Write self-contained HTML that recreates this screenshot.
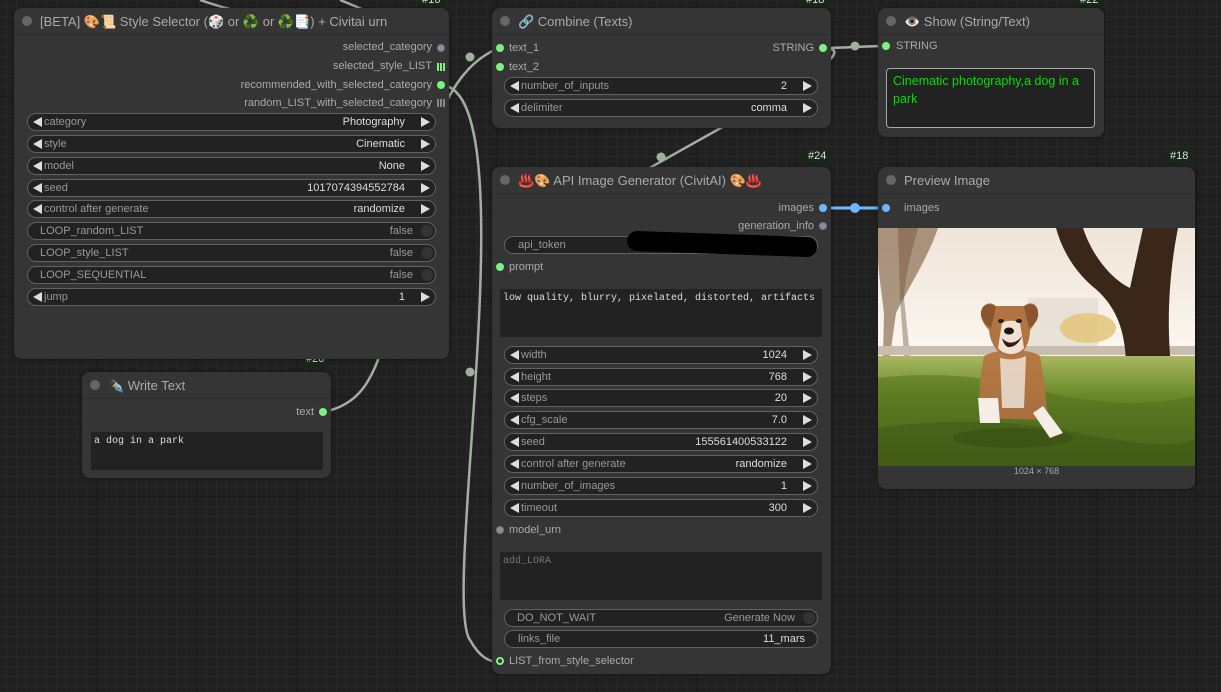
<!DOCTYPE html>
<html><head><meta charset="utf-8">
<style>
*{margin:0;padding:0;box-sizing:border-box}
body{width:1221px;height:692px;overflow:hidden;position:relative;font-family:"Liberation Sans","Noto Sans CJK SC",sans-serif;font-size:11px;color:#aaa;
background-color:#202020;
background-image:linear-gradient(#191919 1px,transparent 1px),linear-gradient(90deg,#191919 1px,transparent 1px),linear-gradient(#282828 1px,transparent 1px),linear-gradient(90deg,#282828 1px,transparent 1px);
background-size:100px 100px,100px 100px,10px 10px,10px 10px;background-position:-4px -4px}
.node{position:absolute;background:#353535;border-radius:8px;box-shadow:0 0 4px rgba(0,0,0,.5)}
.title{position:absolute;left:0;right:0;top:0;height:27px;border-bottom:1px solid #2c2c2c;color:#aaa;font-size:13px;line-height:27px;padding-left:26px;white-space:nowrap}
.title:before{content:"";position:absolute;left:8px;top:8px;width:10px;height:10px;border-radius:50%;background:#666}
.w{position:absolute;height:18px;background:#222;border:1px solid #616161;border-radius:9px;font-size:11px;line-height:16px;color:#999;white-space:nowrap}
.w .l{position:absolute;left:16px}
.w .v{position:absolute;right:30px;color:#ddd}
.w .la{position:absolute;left:5px;top:3px;width:0;height:0;border-top:5px solid transparent;border-bottom:5px solid transparent;border-right:9px solid #ddd}
.w .ra{position:absolute;right:5px;top:3px;width:0;height:0;border-top:5px solid transparent;border-bottom:5px solid transparent;border-left:9px solid #ddd}
.w.t .l{left:12px}.w.t .v{right:22px;color:#999}
.w.t .k{position:absolute;right:2px;top:2px;width:12px;height:12px;border-radius:50%;background:#333}
.w.s .l{left:13px}.w.s .v{right:12px}
.o{position:absolute;white-space:nowrap;text-align:right;color:#aaa}
.i{position:absolute;white-space:nowrap;color:#aaa}
.d{position:absolute;width:8px;height:8px;border-radius:50%}
.g{background:#7df17d}.gr{background:#8d8da0;border:1px solid #777}.b{background:#6cb8ff}
.ta{position:absolute;background:#222;font-family:"Liberation Mono",monospace;font-size:10px;color:#ddd;padding:4px 3px}
.badge{position:absolute;background:#182818;color:#ddd;font-size:11px;padding:1px 4px;border-radius:4px 4px 0 0;height:15px}
</style></head><body>
<svg width="1221" height="692" style="position:absolute;left:0;top:0" fill="none" stroke="#a2af9f" stroke-width="2.5">
<path d="M200 0 C215 5 230 10 245 12"/>
<path d="M340 0 C350 4 360 8 368 12"/>
<path d="M323 412 C360 405 372 380 385 340 C420 220 420 80 499 48"/>
<path d="M440 85 C530 85 440 600 470 640 C480 658 490 662 499 662"/>
<path d="M823 48 C900 48 560 200 499 268"/>
<path d="M823 48 C840 48 870 46 886 46"/>
<circle cx="470" cy="57" r="4.5" fill="#a2af9f" stroke="none"/>
<circle cx="470" cy="372" r="4.5" fill="#a2af9f" stroke="none"/>
<circle cx="661" cy="157" r="4.5" fill="#a2af9f" stroke="none"/>
<circle cx="855" cy="46" r="4.5" fill="#a2af9f" stroke="none"/>
<path d="M823 208 L886 208" stroke="#6cb8ff" stroke-width="3"/>
<circle cx="855" cy="208" r="5" fill="#6cb8ff" stroke="none"/>
</svg>

<div class="badge" style="left:302px;top:352px">#20</div>
<div class="badge" style="left:804px;top:149px">#24</div>
<div class="badge" style="left:1166px;top:149px">#18</div>
<div class="badge" style="left:418px;top:-7px">#16</div>
<div class="badge" style="left:802px;top:-7px">#18</div>
<div class="badge" style="left:1076px;top:-7px">#22</div>

<!-- Style selector -->
<div class="node" style="left:14px;top:8px;width:435px;height:351px">
<div class="title">[BETA] 🎨📜 Style Selector (🎲 or ♻️ or ♻️📑) + Civitai urn</div>
<div class="o" style="right:17px;top:33px">selected_category</div><div class="d gr" style="right:4px;top:36px"></div>
<div class="o" style="right:17px;top:52px">selected_style_LIST</div><div style="position:absolute;right:4px;top:55px;width:8px;height:8px;background:repeating-linear-gradient(90deg,#7df17d 0 2px,transparent 2px 3px)"></div>
<div class="o" style="right:17px;top:71px">recommended_with_selected_category</div><div class="d g" style="right:4px;top:73px"></div>
<div class="o" style="right:17px;top:89px">random_LIST_with_selected_category</div><div style="position:absolute;right:4px;top:91px;width:8px;height:8px;background:repeating-linear-gradient(90deg,#888 0 2px,transparent 2px 3px)"></div>
<div class="w" style="left:13px;top:105px;width:409px"><span class="la"></span><span class="l">category</span><span class="v">Photography</span><span class="ra"></span></div>
<div class="w" style="left:13px;top:127px;width:409px"><span class="la"></span><span class="l">style</span><span class="v">Cinematic</span><span class="ra"></span></div>
<div class="w" style="left:13px;top:149px;width:409px"><span class="la"></span><span class="l">model</span><span class="v">None</span><span class="ra"></span></div>
<div class="w" style="left:13px;top:171px;width:409px"><span class="la"></span><span class="l">seed</span><span class="v">1017074394552784</span><span class="ra"></span></div>
<div class="w" style="left:13px;top:192px;width:409px"><span class="la"></span><span class="l">control after generate</span><span class="v">randomize</span><span class="ra"></span></div>
<div class="w t" style="left:13px;top:214px;width:409px"><span class="l">LOOP_random_LIST</span><span class="v">false</span><span class="k"></span></div>
<div class="w t" style="left:13px;top:236px;width:409px"><span class="l">LOOP_style_LIST</span><span class="v">false</span><span class="k"></span></div>
<div class="w t" style="left:13px;top:258px;width:409px"><span class="l">LOOP_SEQUENTIAL</span><span class="v">false</span><span class="k"></span></div>
<div class="w" style="left:13px;top:280px;width:409px"><span class="la"></span><span class="l">jump</span><span class="v">1</span><span class="ra"></span></div>
</div>

<!-- Write Text -->
<div class="node" style="left:82px;top:372px;width:249px;height:106px">
<div class="title">✒️ Write Text</div>
<div class="o" style="right:17px;top:34px">text</div><div class="d g" style="right:4px;top:36px"></div>
<div class="ta" style="left:9px;top:60px;width:232px;height:38px">a dog in a park</div>
</div>

<!-- Combine -->
<div class="node" style="left:492px;top:8px;width:339px;height:120px">
<div class="title">🔗 Combine (Texts)</div>
<div class="d g" style="left:4px;top:36px"></div><div class="i" style="left:17px;top:34px">text_1</div>
<div class="d g" style="left:4px;top:55px"></div><div class="i" style="left:17px;top:53px">text_2</div>
<div class="o" style="right:17px;top:34px">STRING</div><div class="d g" style="right:4px;top:36px"></div>
<div class="w" style="left:12px;top:69px;width:314px"><span class="la"></span><span class="l">number_of_inputs</span><span class="v">2</span><span class="ra"></span></div>
<div class="w" style="left:12px;top:91px;width:314px"><span class="la"></span><span class="l">delimiter</span><span class="v">comma</span><span class="ra"></span></div>
</div>

<!-- Show -->
<div class="node" style="left:878px;top:8px;width:226px;height:129px">
<div class="title">👁️ Show (String/Text)</div>
<div class="d g" style="left:4px;top:34px"></div><div class="i" style="left:18px;top:32px">STRING</div>
<div style="position:absolute;left:8px;top:60px;width:209px;height:60px;background:#222;border:1px solid #aaa;border-radius:4px;color:#00e000;font-size:12.5px;line-height:18px;padding:3px 6px">Cinematic photography,a dog in a park</div>
</div>

<!-- API -->
<div class="node" style="left:492px;top:167px;width:339px;height:507px">
<div class="title">♨️🎨 API Image Generator (CivitAI) 🎨♨️</div>
<div class="o" style="right:17px;top:35px">images</div><div class="d b" style="right:4px;top:37px"></div>
<div class="o" style="right:17px;top:53px">generation_info</div><div class="d gr" style="right:4px;top:55px"></div>
<div class="w s" style="left:12px;top:69px;width:314px"><span class="l">api_token</span><span style="position:absolute;left:122px;top:-3px;width:190px;height:20px;background:#000;border-radius:10px;transform:rotate(2deg)"></span></div>
<div class="d g" style="left:4px;top:96px"></div><div class="i" style="left:17px;top:94px">prompt</div>
<div class="ta" style="left:8px;top:122px;width:322px;height:48px">low quality, blurry, pixelated, distorted, artifacts</div>
<div class="w" style="left:12px;top:179px;width:314px"><span class="la"></span><span class="l">width</span><span class="v">1024</span><span class="ra"></span></div>
<div class="w" style="left:12px;top:201px;width:314px"><span class="la"></span><span class="l">height</span><span class="v">768</span><span class="ra"></span></div>
<div class="w" style="left:12px;top:222px;width:314px"><span class="la"></span><span class="l">steps</span><span class="v">20</span><span class="ra"></span></div>
<div class="w" style="left:12px;top:244px;width:314px"><span class="la"></span><span class="l">cfg_scale</span><span class="v">7.0</span><span class="ra"></span></div>
<div class="w" style="left:12px;top:266px;width:314px"><span class="la"></span><span class="l">seed</span><span class="v">155561400533122</span><span class="ra"></span></div>
<div class="w" style="left:12px;top:288px;width:314px"><span class="la"></span><span class="l">control after generate</span><span class="v">randomize</span><span class="ra"></span></div>
<div class="w" style="left:12px;top:310px;width:314px"><span class="la"></span><span class="l">number_of_images</span><span class="v">1</span><span class="ra"></span></div>
<div class="w" style="left:12px;top:332px;width:314px"><span class="la"></span><span class="l">timeout</span><span class="v">300</span><span class="ra"></span></div>
<div class="d gr" style="left:4px;top:359px"></div><div class="i" style="left:17px;top:357px">model_urn</div>
<div class="ta" style="left:8px;top:385px;width:322px;height:48px;color:#777">add_LORA</div>
<div class="w t" style="left:12px;top:442px;width:314px"><span class="l">DO_NOT_WAIT</span><span class="v">Generate Now</span><span class="k"></span></div>
<div class="w s" style="left:12px;top:463px;width:314px"><span class="l">links_file</span><span class="v">11_mars</span></div>
<div class="d g" style="left:4px;top:490px;border:2px solid #7df17d;background:#353535"></div><div class="i" style="left:17px;top:488px">LIST_from_style_selector</div>
</div>

<!-- Preview -->
<div class="node" style="left:878px;top:167px;width:317px;height:322px">
<div class="title">Preview Image</div>
<div class="d b" style="left:4px;top:37px"></div><div class="i" style="left:26px;top:35px">images</div>
<svg style="position:absolute;left:0;top:61px" width="317" height="238" viewBox="0 0 317 238">
<defs>
<linearGradient id="sky" x1="0" y1="0" x2="0" y2="1"><stop offset="0" stop-color="#efe4d8"/><stop offset=".5" stop-color="#fbf6ef"/><stop offset="1" stop-color="#e2d8cc"/></linearGradient>
<linearGradient id="gr" x1="0" y1="0" x2="0" y2="1"><stop offset="0" stop-color="#a9b860"/><stop offset=".35" stop-color="#6a8a2a"/><stop offset="1" stop-color="#3f5a18"/></linearGradient>
<linearGradient id="fur" x1="0" y1="0" x2="0" y2="1"><stop offset="0" stop-color="#b57a45"/><stop offset="1" stop-color="#a86f3e"/></linearGradient>
</defs>
<rect width="317" height="238" fill="url(#sky)"/>
<path d="M0 0 L60 0 C50 30 30 60 18 85 L12 128 L5 128 L6 85 C3 60 0 40 0 30Z" fill="#7a5a3c" opacity=".6"/>
<path d="M20 0 L40 0 C35 20 28 40 26 70 L32 128 L26 128 L22 70Z" fill="#6a4a30" opacity=".4"/>
<rect x="150" y="70" width="70" height="55" fill="#ddd5cc" opacity=".6"/>
<ellipse cx="210" cy="100" rx="28" ry="15" fill="#e3c47a" opacity=".85"/>
<rect x="0" y="118" width="317" height="9" fill="#c9bdb0"/>
<path d="M178 0 L205 0 C215 30 235 52 252 60 L265 0 L300 0 C292 40 288 90 293 138 L248 139 C248 100 236 75 214 58 C196 42 184 22 178 0Z" fill="#3a271a"/>
<rect x="0" y="128" width="317" height="110" fill="url(#gr)"/>
<path d="M0 150 Q80 140 160 162 T317 168 L317 238 L0 238Z" fill="#4d6a1a" opacity=".45"/>
<path d="M0 200 Q100 185 200 205 T317 210 L317 238 L0 238Z" fill="#3e5515" opacity=".5"/>
<ellipse cx="135" cy="210" rx="60" ry="10" fill="#2f4510" opacity=".4"/>
<!-- dog -->
<path d="M106 128 C102 150 100 170 102 190 L170 192 C168 170 166 150 162 128 C150 120 120 120 106 128Z" fill="url(#fur)"/>
<path d="M122 130 C130 132 140 132 148 128 L146 180 L124 180Z" fill="#e9dccd" opacity=".9"/>
<path d="M100 170 L120 170 L122 195 L102 195Z" fill="#f4eee6"/>
<path d="M155 185 L165 178 L185 205 L172 210Z" fill="#f4eee6"/>
<path d="M103 85 C105 75 112 73 118 78 L146 78 C152 73 160 75 160 85 C158 95 154 100 152 102 C152 115 146 128 133 130 C120 128 112 115 111 102 C107 98 103 92 103 85Z" fill="#b07440"/>
<path d="M103 84 C104 76 112 74 118 79 L113 100 C106 96 102 90 103 84Z" fill="#8a5530"/>
<path d="M160 84 C159 76 152 74 146 79 L151 100 C158 96 161 90 160 84Z" fill="#8a5530"/>
<path d="M124 95 C128 92 138 92 142 95 L146 120 C140 128 126 128 120 120Z" fill="#efe2d2"/>
<ellipse cx="123" cy="93" rx="3" ry="2" fill="#2a1a12"/>
<ellipse cx="141" cy="93" rx="3" ry="2" fill="#2a1a12"/>
<ellipse cx="131" cy="103" rx="5" ry="3.5" fill="#1e1410"/>
<path d="M124 110 C130 117 138 116 144 108 C142 114 136 120 130 119 C127 118 125 114 124 110Z" fill="#3a1a14"/>
</svg>
<div style="position:absolute;left:0;right:0;top:299px;text-align:center;font-size:9px;color:#aaa">1024 × 768</div>
</div>
</body></html>
